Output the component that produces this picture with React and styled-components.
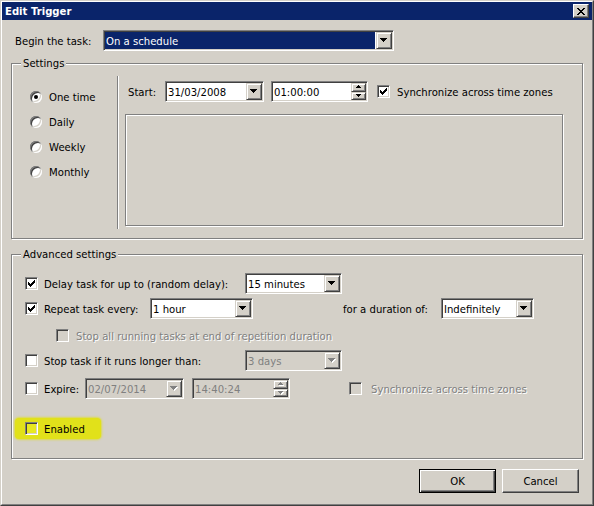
import React from 'react';
import styled, { createGlobalStyle } from 'styled-components';

const GlobalStyle = createGlobalStyle`
  html, body { margin: 0; padding: 0; background: #d4d0c8; }
  body {
    font-family: "DejaVu Sans", Tahoma, sans-serif;
    font-size: 10.1px;
    color: #000;
  }
  * { box-sizing: border-box; }
`;

const Window = styled.div`
  width: 594px;
  height: 506px;
  border: 1px solid;
  border-color: #d4d0c8 #404040 #404040 #d4d0c8;
  background: #d4d0c8;
`;

const Frame = styled.div`
  height: 100%;
  border: 1px solid;
  border-color: #fff #808080 #808080 #fff;
  display: flex;
  flex-direction: column;
`;

const TitleBar = styled.div`
  height: 18px;
  flex-shrink: 0;
  background: #0a246a;
  display: flex;
  align-items: center;
  justify-content: space-between;
  padding: 0 3px 0 2px;
`;

const TitleText = styled.span`
  color: #fff;
  font-weight: bold;
  padding-left: 1px;
`;

const CloseButton = styled.span`
  width: 16px;
  height: 14px;
  display: flex;
  align-items: center;
  justify-content: center;
  background: #d4d0c8;
  border: 1px solid;
  border-color: #fff #404040 #404040 #fff;
  box-shadow: inset -1px -1px 0 #808080;
`;

const Body = styled.div`
  flex: 1;
  display: flex;
  flex-direction: column;
  padding: 0 9px;
`;

const TaskRow = styled.div`
  display: flex;
  align-items: center;
  margin-top: 10px;
  padding-left: 4px;
`;

const Text = styled.span`
  white-space: nowrap;
  flex-shrink: 0;
  padding-top: 1px;
  margin-left: ${(p) => p.$ml || 0}px;
  width: ${(p) => (p.$w ? `${p.$w}px` : 'auto')};
  color: ${(p) => (p.$disabled ? '#808080' : '#000')};
  text-shadow: ${(p) => (p.$disabled ? '1px 1px 0 #fff' : 'none')};
`;

/* sunken edit / combo field */
const Field = styled.div`
  width: ${(p) => p.$w}px;
  height: 21px;
  flex-shrink: 0;
  margin-left: ${(p) => p.$ml || 0}px;
  display: flex;
  align-items: stretch;
  padding: 1px;
  border: 1px solid;
  border-color: #808080 #fff #fff #808080;
  box-shadow: inset 1px 1px 0 #404040, inset -1px -1px 0 #d4d0c8;
  background: ${(p) => (p.$disabled ? '#d4d0c8' : '#fff')};
  color: ${(p) => (p.$disabled ? '#808080' : '#000')};
`;

const Value = styled.span`
  flex: 1;
  display: flex;
  align-items: center;
  padding: 1px 0 0 1px;
  white-space: nowrap;
  overflow: hidden;
  background: ${(p) => (p.$selected ? '#0a246a' : 'transparent')};
  color: ${(p) => (p.$selected ? '#fff' : 'inherit')};
  margin-right: ${(p) => (p.$selected ? 1 : 0)}px;
`;

const RaisedButton = styled.span`
  width: ${(p) => p.$w || 16}px;
  flex: ${(p) => (p.$grow ? 1 : '0 0 auto')};
  display: flex;
  align-items: center;
  justify-content: center;
  background: #d4d0c8;
  border: 1px solid;
  border-color: #d4d0c8 #404040 #404040 #d4d0c8;
  box-shadow: inset 1px 1px 0 #fff, inset -1px -1px 0 #808080;
`;

const SpinColumn = styled.span`
  width: 15px;
  flex-shrink: 0;
  display: flex;
  flex-direction: column;
`;

const CheckBoxBox = styled.span`
  width: 13px;
  height: 13px;
  flex-shrink: 0;
  margin-left: ${(p) => p.$ml || 0}px;
  display: inline-flex;
  align-items: center;
  justify-content: center;
  border: 1px solid;
  border-color: #808080 #fff #fff #808080;
  box-shadow: inset 1px 1px 0 #404040, inset -1px -1px 0 #d4d0c8;
  background: ${(p) => p.$bg || '#fff'};
`;

const RadioCircle = styled.span`
  width: 12px;
  height: 12px;
  flex-shrink: 0;
  border-radius: 50%;
  background: #fff;
  display: inline-flex;
  align-items: center;
  justify-content: center;
  box-shadow: inset 1px 1px 0 #808080, inset -1px -1px 0 #fff,
    inset 2px 2px 0 #404040, inset -2px -2px 0 #d4d0c8;

  &::after {
    content: '';
    width: 4px;
    height: 4px;
    border-radius: 50%;
    background: ${(p) => (p.$checked ? '#000' : 'transparent')};
  }
`;

const Group = styled.div`
  position: relative;
  height: ${(p) => p.$h}px;
  margin-top: ${(p) => p.$mt}px;
  border: 1px solid #808080;
  box-shadow: inset 1px 1px 0 #fff, 1px 1px 0 #fff;
`;

const GroupTitle = styled.span`
  position: absolute;
  top: -6px;
  left: 9px;
  padding: 0 2px;
  line-height: 12px;
  background: #d4d0c8;
`;

const SettingsBody = styled.div`
  display: flex;
  height: 100%;
`;

const RadioColumn = styled.div`
  width: 105px;
  padding: 20px 0 0 18px;
  display: flex;
  flex-direction: column;
`;

const RadioRow = styled.div`
  height: 25px;
  display: flex;
  align-items: center;
  gap: 7px;
`;

const Separator = styled.div`
  width: 2px;
  margin: 12px 0 9px;
  border-left: 1px solid #808080;
  border-right: 1px solid #fff;
`;

const ScheduleColumn = styled.div`
  flex: 1;
  padding-left: 6px;
  display: flex;
  flex-direction: column;
`;

const StartRow = styled.div`
  display: flex;
  align-items: center;
  margin-top: 17px;
`;

const SchedulePanel = styled.div`
  width: 438px;
  height: 112px;
  margin-top: 12px;
  border: 1px solid #808080;
  box-shadow: inset 1px 1px 0 #fff, 1px 1px 0 #fff;
`;

const AdvancedBody = styled.div`
  padding: 18px 0 0 13px;
  display: flex;
  flex-direction: column;
`;

const Row = styled.div`
  height: 21px;
  display: flex;
  align-items: center;
  margin-top: ${(p) => p.$mt || 0}px;
  padding-left: ${(p) => p.$indent || 0}px;
`;

const Highlight = styled.span`
  height: 21px;
  display: inline-flex;
  align-items: center;
  margin-left: -10px;
  padding: 0 16px 0 10px;
  border-radius: 4px;
  background: #e1e11a;
  box-shadow: 0 0 2px 1px rgba(225, 225, 26, 0.7);
`;

const ButtonRow = styled.div`
  display: flex;
  justify-content: flex-end;
  gap: 6px;
  margin-top: 10px;
  padding-right: 4px;
`;

const DialogButton = styled.button`
  width: 77px;
  height: 24px;
  padding: 1px 0 0;
  font: inherit;
  color: #000;
  background: #d4d0c8;
  border: 1px solid;
  border-color: ${(p) => (p.$default ? '#000' : '#fff #404040 #404040 #fff')};
  box-shadow: ${(p) =>
    p.$default
      ? 'inset 1px 1px 0 #fff, inset -1px -1px 0 #404040, inset -2px -2px 0 #808080'
      : 'inset -1px -1px 0 #808080'};
`;

function DownArrow({ disabled }) {
  const d = 'M0 0h7v1H0zM1 1h5v1H1zM2 2h3v1H2zM3 3h1v1H3z';
  return (
    <svg width="8" height="5" viewBox="0 0 8 5" shapeRendering="crispEdges">
      {disabled && <path d={d} fill="#fff" transform="translate(1 1)" />}
      <path d={d} fill={disabled ? '#808080' : '#000'} />
    </svg>
  );
}

function SpinArrow({ up, disabled }) {
  const d = up
    ? 'M2 0h1v1H2zM1 1h3v1H1zM0 2h5v1H0z'
    : 'M0 0h5v1H0zM1 1h3v1H1zM2 2h1v1H2z';
  return (
    <svg width="6" height="4" viewBox="0 0 6 4" shapeRendering="crispEdges">
      {disabled && <path d={d} fill="#fff" transform="translate(1 1)" />}
      <path d={d} fill={disabled ? '#808080' : '#000'} />
    </svg>
  );
}

function ComboBox({ value, width, ml, disabled, selected }) {
  return (
    <Field $w={width} $ml={ml} $disabled={disabled}>
      <Value $selected={selected}>{value}</Value>
      <RaisedButton>
        <DownArrow disabled={disabled} />
      </RaisedButton>
    </Field>
  );
}

function TimeBox({ value, width, ml, disabled }) {
  return (
    <Field $w={width} $ml={ml} $disabled={disabled}>
      <Value>{value}</Value>
      <SpinColumn>
        <RaisedButton $w={15} $grow>
          <SpinArrow up disabled={disabled} />
        </RaisedButton>
        <RaisedButton $w={15} $grow>
          <SpinArrow disabled={disabled} />
        </RaisedButton>
      </SpinColumn>
    </Field>
  );
}

function CheckBox({ checked, disabled, ml, bg }) {
  return (
    <CheckBoxBox $ml={ml} $bg={bg || (disabled ? '#d4d0c8' : '#fff')}>
      {checked && (
        <svg width="7" height="7" viewBox="0 0 7 7" shapeRendering="crispEdges">
          <path
            d="M6 0h1v1H6zM5 1h2v1H5zM0 2h1v1H0zM4 2h3v1H4zM0 3h2v1H0zM3 3h3v1H3zM0 4h5v1H0zM1 5h3v1H1zM2 6h1v1H2z"
            fill="#000"
          />
        </svg>
      )}
    </CheckBoxBox>
  );
}

const schedules = [
  { label: 'One time', checked: true },
  { label: 'Daily' },
  { label: 'Weekly' },
  { label: 'Monthly' },
];

export default function App() {
  return (
    <>
      <GlobalStyle />
      <Window>
        <Frame>
          <TitleBar>
            <TitleText>Edit Trigger</TitleText>
            <CloseButton>
              <svg width="8" height="7" viewBox="0 0 8 7" shapeRendering="crispEdges">
                <path
                  d="M0 0h2v1H0zM6 0h2v1H6zM1 1h2v1H1zM5 1h2v1H5zM2 2h4v1H2zM3 3h2v1H3zM2 4h4v1H2zM1 5h2v1H1zM5 5h2v1H5zM0 6h2v1H0zM6 6h2v1H6z"
                  fill="#000"
                />
              </svg>
            </CloseButton>
          </TitleBar>

          <Body>
            <TaskRow>
              <Text $w={88}>Begin the task:</Text>
              <ComboBox value="On a schedule" width={291} selected />
            </TaskRow>

            <Group $h={176} $mt={12}>
              <GroupTitle>Settings</GroupTitle>
              <SettingsBody>
                <RadioColumn>
                  {schedules.map((s) => (
                    <RadioRow key={s.label}>
                      <RadioCircle $checked={s.checked} />
                      <Text>{s.label}</Text>
                    </RadioRow>
                  ))}
                </RadioColumn>
                <Separator />
                <ScheduleColumn>
                  <StartRow>
                    <Text $ml={3} $w={37}>Start:</Text>
                    <ComboBox value="31/03/2008" width={99} />
                    <TimeBox value="01:00:00" width={97} ml={7} />
                    <CheckBox checked ml={9} />
                    <Text $ml={7}>Synchronize across time zones</Text>
                  </StartRow>
                  <SchedulePanel />
                </ScheduleColumn>
              </SettingsBody>
            </Group>

            <Group $h={205} $mt={15}>
              <GroupTitle>Advanced settings</GroupTitle>
              <AdvancedBody>
                <Row>
                  <CheckBox checked />
                  <Text $ml={6} $w={201}>Delay task for up to (random delay):</Text>
                  <ComboBox value="15 minutes" width={97} />
                </Row>
                <Row $mt={4}>
                  <CheckBox checked />
                  <Text $ml={6} $w={106}>Repeat task every:</Text>
                  <ComboBox value="1 hour" width={103} />
                  <Text $ml={90} $w={98}>for a duration of:</Text>
                  <ComboBox value="Indefinitely" width={93} />
                </Row>
                <Row $mt={6} $indent={31}>
                  <CheckBox disabled />
                  <Text $ml={7} $disabled>
                    Stop all running tasks at end of repetition duration
                  </Text>
                </Row>
                <Row $mt={4}>
                  <CheckBox />
                  <Text $ml={6} $w={201}>Stop task if it runs longer than:</Text>
                  <ComboBox value="3 days" width={97} disabled />
                </Row>
                <Row $mt={7}>
                  <CheckBox />
                  <Text $ml={6} $w={41}>Expire:</Text>
                  <ComboBox value="02/07/2014" width={99} disabled />
                  <TimeBox value="14:40:24" width={98} ml={8} disabled />
                  <CheckBox disabled ml={59} />
                  <Text $ml={9} $disabled>Synchronize across time zones</Text>
                </Row>
                <Row $mt={19}>
                  <Highlight>
                    <CheckBox bg="#e8e820" />
                    <Text $ml={6}>Enabled</Text>
                  </Highlight>
                </Row>
              </AdvancedBody>
            </Group>

            <ButtonRow>
              <DialogButton $default>OK</DialogButton>
              <DialogButton>Cancel</DialogButton>
            </ButtonRow>
          </Body>
        </Frame>
      </Window>
    </>
  );
}
